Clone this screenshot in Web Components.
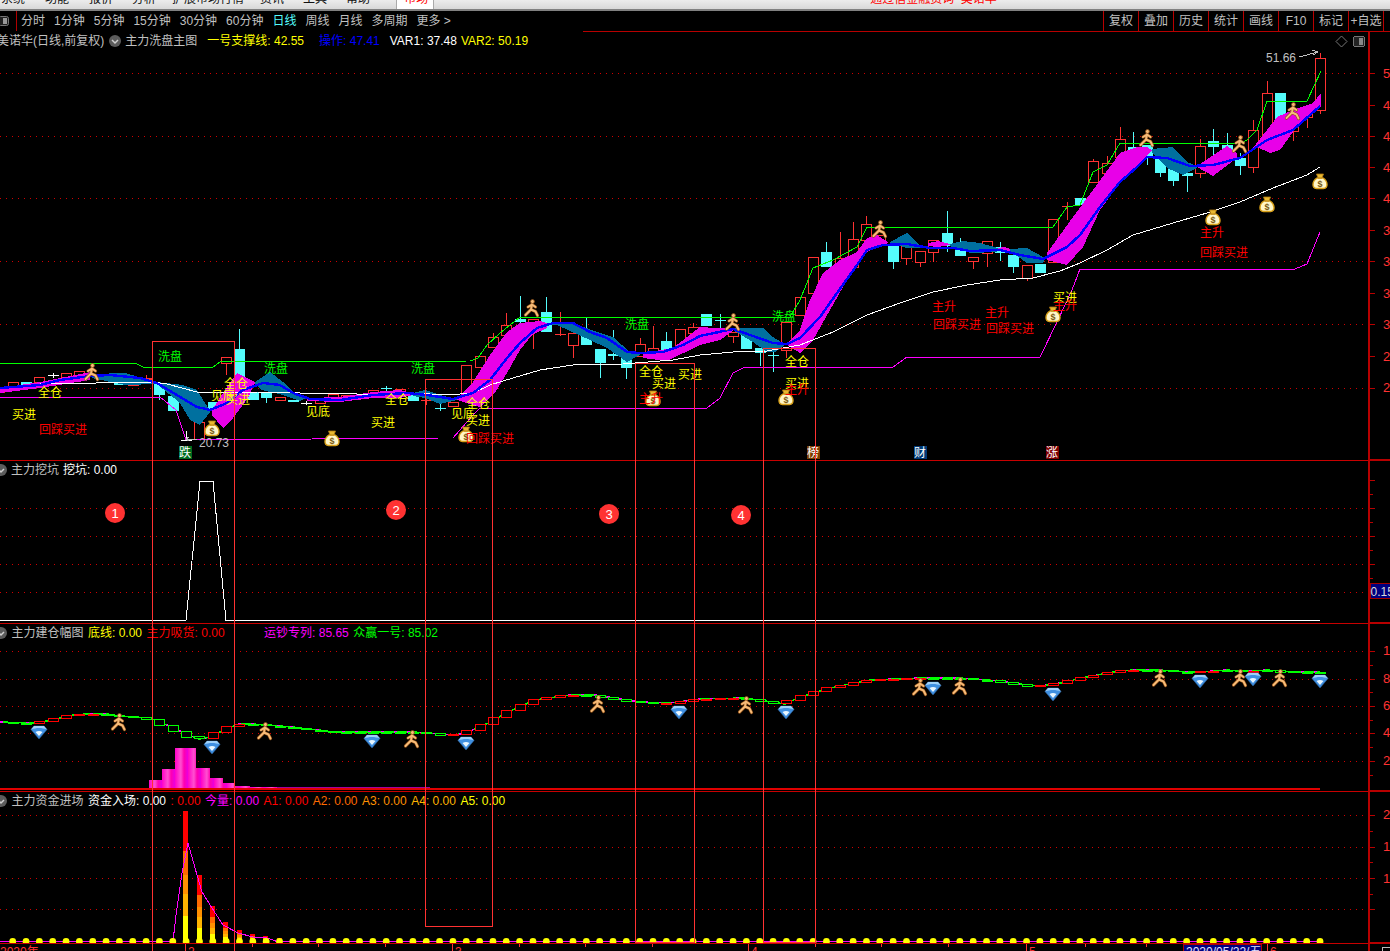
<!DOCTYPE html>
<html lang="zh">
<head>
<meta charset="utf-8">
<title>美诺华 日线</title>
<style>
html,body{margin:0;padding:0;background:#000;overflow:hidden}
stock-terminal{font:12px/1 "Liberation Sans","Noto Sans CJK SC",sans-serif}
</style>
</head>
<body>
<stock-terminal></stock-terminal>
<script>
const RED='#ff3232',CY='#54fcfc',GRID='#d00000',AXIS='#b80000';
const cx=i=>-0.64+13.34*i;
const pts=a=>{let s='';for(let i=0;i<a.length;i+=2)s+=a[i]+','+a[i+1]+' ';return s};
const line=(a,c,w=1,extra='')=>`<polyline fill="none" stroke="${c}" stroke-width="${w}" points="${pts(a)}" ${extra}/>`;
const hl=(y,x1=0,x2=1368)=>`<line x1="${x1}" x2="${x2}" y1="${y+.5}" y2="${y+.5}" stroke="${GRID}" stroke-dasharray="1 5"/>`;
const t=(x,y,s,c,a='middle',fs=12)=>`<text x="${x}" y="${y+4.5}" fill="${c}" text-anchor="${a}" font-size="${fs}">${s}</text>`;
function person(x,y){const d='M0-4L-1 1.5M0-3.500L-4-1M0-3.500L3.500-1M-1 1.5L-6.500 7M-1 1.5L3.500 3.500L5.500 7.500';return `<g transform="translate(${x} ${y})" shape-rendering="geometricPrecision" fill="none" stroke-linecap="round" stroke-linejoin="round">
<path d="${d}" stroke="#8a4a12" stroke-width="3.200"/>
<path d="${d}" stroke="#f6bb78" stroke-width="2"/>
<circle cx="0.5" cy="-6.500" r="2" fill="#f6bb78" stroke="#8a4a12" stroke-width=".7"/></g>`}
function bag(x,y){return `<g transform="translate(${x} ${y})" shape-rendering="geometricPrecision">
<path d="M-3-3C-8 0-8.500 7.500-3.500 7.500L3.500 7.500C8.500 7.500 8 0 3-3Z" fill="#fff6c8" stroke="#d8a018" stroke-width="1.400"/>
<path d="M-3.500-7L3.500-7L2-3L-2-3Z" fill="#e8b830" stroke="#b07a10" stroke-width=".8"/>
<text x="0" y="5.500" text-anchor="middle" font-size="9" font-weight="700" fill="#7a5a10">$</text></g>`}
function gem(x,y){return `<g transform="translate(${x} ${y})" shape-rendering="geometricPrecision">
<path d="M-8-2.500L-5-6L5-6L8-2.500L0 7Z" fill="#3f8fe0" stroke="#2a5f9a" stroke-width=".6"/>
<path d="M-8-2.500L-5-6L5-6L8-2.500C3-4.500-3-4.500-8-2.500Z" fill="#9fd0f8"/>
<path d="M-3.500 0C-1-1.500 1-1.500 3.500 0L0 4Z" fill="#e8f6ff"/></g>`}

const CANDLES=`r 0 389 392;r 1 382 386;c 2 382 385;r 3 377 382;w 4 375 375 373 378;r 5 373 377;r 6 371 375;c 7 375 377;c 8 377 380;c 9 380 385;r 10 382 385;r 11 378 379 375 382;c 12 383 395 383 400;c 13 396 411;w 14 440 440 431 440;r 15 422 439;c 16 402 410;r 17 357 363 357 375;c 18 349 383 329 383;c 19 392 400;c 20 393 398 393 403;r 21 397 400;c 22 400 402;w 23 403 403 401 405;r 24 400 403;r 25 394 397;r 26 395 398;r 27 396 398;r 28 390 395;c 29 388 388 386 391;r 30 389 392;c 31 395 401;r 32 400 400 392 405;c 33 408 408 403 411;r 34 402 406;r 35 365 393;r 36 356 367;r 37 337 347 333 347;r 38 325 335 313 335;c 39 319 322 296 330;r 40 319 323 319 349;c 41 312 332 297 332;r 42 334 334 312 336;r 43 333 345 333 358;c 44 333 345 318 345;c 45 349 363 349 378;c 46 354 356 330 360;c 47 358 368 358 379;r 48 344 356 338 356;r 49 348 355 326 355;c 50 341 352 332 352;r 51 329 345;r 52 327 333 323 333;c 53 314 326;c 54 320 321 314 338;r 55 332 336 332 343;c 56 335 349;c 57 348 353 348 366;c 58 355 355 351 372;r 59 322 350 322 358;r 60 297 315;r 61 257 293;c 62 252 267 242 267;r 63 258 275 232 275;r 64 239 267 222 267;r 65 224 240 216 240;r 66 235 240;c 67 246 262 246 269;r 68 246 258 246 265;r 69 251 262 251 267;r 70 240 252 240 262;c 71 233 246 211 252;c 72 247 256 238 256;r 73 257 261 257 269;r 74 241 253 241 267;c 75 247 253 242 261;c 76 255 267 255 273;r 77 265 278 265 281;c 78 264 273;r 79 219 262;r 80 206 206 202 220;c 81 198 205;r 82 161 182 159 182;r 83 163 173 156 173;r 84 139 157 127 157;c 85 147 150 132 150;c 86 145 157 145 165;c 87 158 173 158 177;c 88 168 181 168 186;c 89 173 176 173 192;r 90 146 173 139 178;c 91 141 147 129 160;c 92 145 150 133 160;c 93 158 166 153 175;r 94 130 167 120 173;r 95 93 138 81 138;c 96 93 120;r 97 127 131 127 141;r 98 113 117 113 128;r 99 58 110 53 114`;
function candleSvg(){
 return CANDLES.split(';').map(s=>{
  const p=s.split(' '),col=p[0],i=+p[1],top=+p[2],bot=+p[3],hi=p[4]?+p[4]:top,lo=p[5]?+p[5]:bot;
  const x=Math.round(cx(i)),c=col==='r'?RED:col==='c'?CY:'#fff';
  let o=`<line x1="${x+.5}" x2="${x+.5}" y1="${hi}" y2="${lo}" stroke="${c}"/>`;
  if(bot-top<1)o+=`<line x1="${x-5}" x2="${x+6}" y1="${top+.5}" y2="${top+.5}" stroke="${c}" stroke-width="1"/>`;
  else if(col==='r')o+=`<rect x="${x-5+.5}" y="${top+.5}" width="10" height="${bot-top}" fill="#000" stroke="${c}"/>`;
  else o+=`<rect x="${x-5}" y="${top}" width="11" height="${bot-top}" fill="${c}"/>`;
  return o}).join('');
}
const M='#e800e8',T='#00709f';
const BANDS=[
[M,[0,388,40,382,90,372],[0,393,40,388,90,380]],
[T,[92,374,125,373,157,382],[92,378,125,385,157,384]],
[T,[157,382,183,385,197,390,205,403,210,410],[157,384,180,403,190,420,200,425,210,412]],
[M,[212,410,227,387,237,373,255,382],[212,415,223,428,233,418,248,398,255,383]],
[T,[255,382,270,372,283,382,297,395,307,398],[255,384,262,390,283,395,300,401]],
[M,[307,398,340,397,373,392,400,390,413,393],[307,401,340,402,373,398,400,398,413,395]],
[T,[413,393,425,390,440,395,457,399],[413,396,425,398,440,404,457,400]],
[M,[457,398,473,382,490,355,507,332,520,323,540,321,547,323],[457,400,480,407,495,393,507,373,520,350,532,335,547,328]],
[T,[547,323,557,322,573,323,597,332,613,337,630,352,640,353],[547,325,557,325,590,340,607,348,627,362,640,355]],
[M,[643,353,673,348,700,327,733,329],[643,358,667,361,700,345,720,340,733,331]],
[T,[733,328,763,328,773,337,783,343],[733,330,753,342,767,352,775,352,785,345]],
[M,[787,343,800,330,810,300,823,273,840,260,857,252,867,238,877,235,888,242],[787,345,800,353,813,340,830,310,847,280,857,267,867,252,883,245,888,243]],
[T,[890,242,907,233,917,243,923,247],[890,243,907,248,923,248]],
[M,[928,243,938,241,950,244],[928,246,938,247,950,245]],
[T,[950,244,963,241,980,243,998,248],[950,246,970,253,997,252]],
[M,[998,248,1004,247,1010,249],[998,251,1004,252,1010,251]],
[T,[1010,249,1027,248,1045,258],[1010,251,1027,263,1043,263]],
[M,[1047,253,1073,217,1093,190,1120,153,1137,147,1147,147,1152,150],[1047,260,1067,265,1083,247,1100,210,1117,187,1137,165,1152,151]],
[T,[1152,149,1173,147,1187,162,1197,166],[1152,152,1167,168,1183,175,1197,168]],
[M,[1197,166,1227,146,1237,153],[1197,167,1213,176,1237,158]],
[M,[1253,148,1277,117,1293,110,1313,103,1321,93],[1257,147,1270,153,1280,150,1293,132,1307,117,1321,107]]
];
const rev=a=>{const o=[];for(let i=a.length-2;i>=0;i-=2)o.push(a[i],a[i+1]);return o};
const BLUE=[0,388,40,385,60,380,90,376,110,375,140,378,157,383,180,397,197,407,210,410,227,403,243,390,263,383,280,385,293,393,310,399,340,400,373,395,407,393,427,395,453,399,473,393,490,380,507,358,520,343,537,328,553,323,573,323,590,332,607,338,627,352,640,353,663,352,683,345,700,336,733,329,750,335,773,343,787,344,800,338,820,317,837,293,857,265,867,250,883,245,907,244,930,248,953,248,970,251,1000,250,1020,255,1043,259,1067,247,1080,235,1100,207,1120,182,1137,167,1147,157,1167,158,1190,166,1213,165,1240,158,1267,140,1293,130,1310,115,1320,106];
const WHITE=[40,384,153,382,167,384,197,392,257,392,300,393,340,393,373,395,413,393,447,395,473,393,490,385,513,378,540,370,573,365,623,364,673,360,700,355,733,352,767,351,800,345,833,332,867,315,900,303,933,292,967,285,1000,280,1033,278,1060,271,1080,263,1107,250,1133,235,1173,223,1207,213,1240,202,1273,188,1307,175,1320,167];
const GREEN=[0,363,135,363,143,367,213,367,220,362,470,361,478,358,487,345,500,333,520,317,790,317,800,300,813,268,833,260,857,247,867,227,1053,227,1067,207,1080,205,1093,172,1107,165,1120,143,1240,143,1247,140,1257,130,1267,101,1307,101,1321,71];
const SUP=[0,397,160,397,176,410,186,440,440,438,453,438,473,415,480,408,707,408,720,398,733,373,745,367,893,367,907,357,1040,357,1058,320,1072,290,1080,269,1295,269,1307,264,1320,232];
function mainPane(){
 let s=[73,136,198,261,324,388].map(y=>hl(y)).join('');
 s+=candleSvg();
 s+=line(GREEN,'#00ff00');
 s+=BANDS.map(b=>`<polygon fill="${b[0]}" points="${pts(b[1].concat(rev(b[2])))}"/>`).join('');
 s+=line(WHITE,'#fff',1);
 s+=line(BLUE,'#0000ff',2.4);
 s+=line(SUP,'#ff00ff',1);
 [[92,372],[532,308],[733,322],[880,229],[1147,138],[1240,144],[1293,111]].forEach(p=>s+=person(p[0],p[1]));
 [[212,428],[332,438],[466,434],[653,398],[786,397],[1053,314],[1213,217],[1267,204],[1320,181]].forEach(p=>s+=bag(p[0],p[1]));
 const Y='#ffff00',G='#00ff00',R='#ff0000';
 [[170,356],[276,368],[423,368],[637,324],[784,316]].forEach(p=>s+=t(p[0],p[1],'洗盘',G));
 [[50,392],[236,383],[397,399],[478,403],[651,371],[797,361]].forEach(p=>s+=t(p[0],p[1],'全仓',Y));
 [[24,414],[238,399],[383,422],[478,420],[664,383],[690,374],[797,383],[1065,297]].forEach(p=>s+=t(p[0],p[1],'买进',Y));
 [[223,395],[318,411],[463,413]].forEach(p=>s+=t(p[0],p[1],'见底',Y));
 [[63,429],[490,438],[957,324],[1010,328],[1224,252]].forEach(p=>s+=t(p[0],p[1],'回踩买进',R));
 [[651,398],[797,389],[944,306],[997,312],[1212,232],[1065,305]].forEach(p=>s+=t(p[0],p[1],'主升',R));
 s+=t(1266,57,'51.66','#c0c0c0','start');
 s+=line([1299,57,1307,55,1317,52],'#c0c0c0')+line([1312,50,1318,52,1313,55],'#c0c0c0');
 s+=t(199,442,'20.73','#c0c0c0','start');
 s+=line([197,439,186,439],'#c0c0c0')+line([189,437,186,439,189,441],'#c0c0c0');
 [[185,'跌','#006a1e'],[813,'榜','#7a3c00'],[920,'财','#003a78'],[1052,'涨','#7e0000']].forEach(b=>{
  s+=`<rect x="${b[0]-6.5}" y="446" width="13" height="13" fill="${b[2]}"/>`+t(b[0],452,b[1],'#fff','middle',12)});
 s+=`<path d="M1341.5 36L1347 41.500L1341.5 47L1336 41.500Z" fill="none" stroke="#777" shape-rendering="geometricPrecision"/>`;
 s+=`<rect x="1353.500" y="36.500" width="11" height="10" rx="2" fill="#222" stroke="#777"/><rect x="1359" y="38" width="4" height="7" fill="#888"/>`;
 return s;
}
function pane2(){
 let s=[508,536,564,592].map(y=>hl(y)).join('');
 s+=line([0,620.5,186,620.5,200,481,213,481,226,620.5,1320,620.5],'#fff',1);
 return s;
}
const P3=[0,722,33,723,47,721,60,718,73,715,87,714,107,714,120,716,133,717,150,718,159,722,172,727,186,734,199,739,212,737,225,729,239,724,252,724,267,725,279,726,293,727,307,729,319,730,333,732,347,732,373,732,387,732,400,732,413,732,427,733,440,734,453,735,466,733,479,727,493,721,506,713,519,707,535,700,570,695,595,695,640,702,670,703,700,699,745,698,785,704,800,697,830,688,870,680,920,678,960,678,1000,681,1027,685,1040,686,1053,684,1067,682,1080,678,1093,676,1107,673,1120,671,1133,670,1147,670,1160,670,1173,671,1187,672,1200,672,1213,671,1227,670,1240,671,1253,671,1267,670,1280,671,1293,672,1307,672,1320,672];
function yAt(x){for(let i=0;i<P3.length-2;i+=2){if(x<=P3[i+2]){const f=Math.max(0,(x-P3[i])/(P3[i+2]-P3[i]));return P3[i+1]+f*(P3[i+3]-P3[i+1])}}return P3[P3.length-1]}
function pane3(){
 let s=`<defs><linearGradient id="pk" gradientUnits="userSpaceOnUse" x1="149" x2="162" y1="0" y2="0" spreadMethod="repeat"><stop offset="0" stop-color="#ff00c8"/><stop offset=".45" stop-color="#ff50d0"/><stop offset=".7" stop-color="#ff00b0"/><stop offset="1" stop-color="#e800e0"/></linearGradient></defs>`;
 s+=[651,679,706,733,761].map(y=>hl(y)).join('');
 [[149,162,780],[162,175,769],[175,196,748],[196,210,768],[210,223,778],[223,235,783],[235,250,786],[250,277,787]].forEach(b=>s+=`<rect x="${b[0]}" y="${b[2]}" width="${b[1]-b[0]}" height="${788-b[2]}" fill="url(#pk)"/>`);
 s+=line([277,787.5,430,787.5],'#a000a0',1);
 s+=`<rect x="0" y="788" width="1320" height="2" fill="#e00000"/>`;
 s+=line(P3,'#00ff00',1.5)+line(P3,'#ff00ff',1.5,'stroke-dasharray="3 10"');
 for(let i=0;i<=99;i++){const x=Math.round(cx(i)),a=yAt(x-6.67),b=yAt(x+6.67),top=Math.round(Math.min(a,b)),bot=Math.round(Math.max(a,b));
  const c=b<a?'#ff0000':'#00ff00';
  if(x<0)continue;
  if(bot-top<2)s+=`<rect x="${x-5}" y="${top}" width="11" height="2" fill="${c}"/>`;
  else s+=`<rect x="${x-5+.5}" y="${top+.5}" width="10" height="${bot-top}" fill="#000" stroke="${c}"/>`;}
 [[39,732],[212,747],[372,741],[466,743],[679,712],[786,712],[933,688],[1053,694],[1200,681],[1253,679],[1320,681]].forEach(p=>s+=gem(p[0],p[1]));
 [[119,722],[265,731],[412,739],[598,704],[746,705],[920,687],[960,686],[1160,678],[1240,678],[1280,678]].forEach(p=>s+=person(p[0],p[1]));
 return s;
}
function pane4(){
 let s=[815,847,878,909].map(y=>hl(y)).join('');
 const cols=[[0,'#ff0000'],[.31,'#ff6a00'],[.49,'#ff9000'],[.64,'#ffb400'],[.81,'#ffff00']];
 [[185,811,5],[199,875,5],[212,906,5],[225,922,5],[239,930,5],[252,934,5],[265,936,5],[279,938,5]].forEach(b=>{
  const h=941-b[1];cols.forEach((c,k)=>{const st=cols[k][0],en=k<4?cols[k+1][0]:1;
   s+=`<rect x="${b[0]-2}" y="${b[1]+st*h}" width="${b[2]}" height="${(en-st)*h+.5}" fill="${c[1]}"/>`})});
 s+=line([0,941.5,173,941.5,176,915,182,873,188,843,197,875,202,892,212,908,223,925,238,933,253,937,267,938,277,941.5,1320,941.5],'#ff00ff',1);
 for(let i=1;i<=99;i++)s+=`<circle cx="${cx(i)}" cy="941.500" r="3.400" fill="#ffff00" shape-rendering="geometricPrecision"/>`;
 return s;
}
const AX={
 main:{long:[73,105,136,167,198,230,261,293,324,356,388],short:[],lab:[[74,'5'],[106,'4'],[137,'4'],[168,'4'],[199,'4'],[231,'3'],[262,'3'],[294,'3'],[325,'3'],[357,'2'],[388,'2']]},
 p2:{long:[480,508,536,564,592],short:[494,522,550,578],lab:[]},
 p3:{long:[651,679,706,733,761],short:[665,692,720,747,775],lab:[[651,'1'],[679,'8'],[706,'6'],[733,'4'],[761,'2']]},
 p4:{long:[815,847,878,909],short:[831,862,894],lab:[[815,'2'],[847,'1'],[879,'1']]}
};
const RENDER={main:mainPane,p2:pane2,p3:pane3,p4:pane4};

class StockTerminal extends HTMLElement{
 constructor(){super();this.attachShadow({mode:'open'}).innerHTML=`<style>
 :host{display:flex;flex-direction:column;width:1390px;height:951px;background:#000;overflow:hidden;color:#c0c0c0}
 </style>
 <top-menu></top-menu><chart-toolbar></chart-toolbar><chart-stage></chart-stage><time-axis></time-axis>`}
}
class TopMenu extends HTMLElement{
 constructor(){super();this.attachShadow({mode:'open'}).innerHTML=`<style>
 :host{display:flex;height:11px;box-sizing:border-box;overflow:hidden;background:linear-gradient(#ececec,#d8d8d8);border-bottom:2px solid #808080;color:#111;font-size:12px;line-height:12px}
 span{display:block;margin-top:-7px;white-space:nowrap;flex:none}
 .tab{margin-top:0;background:#fff;border:solid #aaa;border-width:0 1px;height:9px;width:38px;box-sizing:border-box;margin-left:26px;overflow:hidden}
 .tab b{display:block;font-weight:400;color:#f00;margin:-7px 0 0 7px}
 .r{color:#f00;margin-left:436px}
 </style>
 <span style="margin-left:1px">系统</span><span style="margin-left:20px">功能</span><span style="margin-left:20px">报价</span><span style="margin-left:19px">分析</span><span style="margin-left:16px">扩展市场行情</span><span style="margin-left:16px">资讯</span><span style="margin-left:19px">工具</span><span style="margin-left:19px">帮助</span>
 <div class="tab"><b>市场</b></div><span class="r">通过信金融资询&nbsp;&nbsp;美诺华</span>`}
}
class ChartToolbar extends HTMLElement{
 constructor(){super();const L=['分时','1分钟','5分钟','15分钟','30分钟','60分钟','日线','周线','月线','多周期','更多 &gt;'];
 const R=['复权','叠加','历史','统计','画线','F10','标记','+自选','1'];
 this.attachShadow({mode:'open'}).innerHTML=`<style>
 :host{display:flex;height:21px;color:#c0c0c0;font-size:12px;line-height:21px;overflow:hidden;flex:none}
 .ic{width:17px;box-sizing:border-box;border-right:1px solid #b00000;height:20px;display:flex;align-items:center;flex:none;margin-right:4px}
 .l{display:flex;gap:9px;flex:none}
 .on{color:${CY}}
 .sp{flex:1;border-bottom:1px solid ${AXIS};margin-left:132px;height:20px}
 .r{display:flex;flex:none;width:287px;overflow:hidden;border-bottom:1px solid ${AXIS};height:20px}
 .r span{flex:none;width:35px;box-sizing:border-box;border-left:1px solid ${AXIS};text-align:center}
 </style>
 <div class="ic"><svg width="12" height="12" style="margin-left:-2px"><rect x=".5" y="1.500" width="10" height="9" rx="2" fill="#222" stroke="#777"/><rect x="5" y="3" width="4" height="6" fill="#999"/></svg></div>
 <div class="l">${L.map(s=>`<span class="${s==='日线'?'on':''}">${s}</span>`).join('')}</div>
 <div class="sp"></div><div class="r">${R.map(s=>`<span>${s}</span>`).join('')}</div>`}
}
class LegendDot extends HTMLElement{
 constructor(){super();this.attachShadow({mode:'open'}).innerHTML=`<style>:host{display:inline-flex;flex:none;width:12px;height:12px}</style>
 <svg width="12" height="12"><circle cx="6" cy="6" r="6" fill="#5c5c5c"/><path d="M3 5L6 8L9 5" fill="none" stroke="#d0d0d0" stroke-width="1.500"/></svg>`}
}
class PaneLegend extends HTMLElement{
 constructor(){super();this.attachShadow({mode:'open'}).innerHTML=`<style>
 :host{position:absolute;left:0;top:0;display:flex;align-items:center;height:var(--h,17px);gap:var(--g,4.5px);white-space:nowrap;font-size:12px;z-index:2}
 </style><slot></slot>`}
}
class ChartPane extends HTMLElement{
 constructor(){super();this.attachShadow({mode:'open'})}
 connectedCallback(){
  const k=this.getAttribute('kind'),y0=+this.getAttribute('y0'),h=+this.getAttribute('h'),ih=h-1;
  const ax=AX[k];
  let a=`<rect x="0" y="${y0}" width="2" height="${h}" fill="${AXIS}"/>`;
  ax.long.forEach(y=>a+=`<rect x="2" y="${y}" width="5" height="1" fill="${AXIS}"/>`);
  ax.short.forEach(y=>a+=`<rect x="2" y="${y}" width="3" height="1" fill="${AXIS}"/>`);
  ax.lab.forEach(l=>a+=t(15,l[0]-.5,l[1],RED,'start',13));
  if(k==='p2')a+=`<rect x="2.500" y="583.500" width="22" height="15" fill="#000080" stroke="#a00000"/>`+t(2.500,591,'0.15','#d8d8d8','start',12);
  this.shadowRoot.innerHTML=`<style>
  :host{display:flex;height:${h}px;box-sizing:border-box;flex:none;position:relative;overflow:hidden}
  .plot{position:relative;width:1368px;flex:none;height:${h}px;box-sizing:border-box;border-bottom:1px solid #c80000}
  svg{display:block;shape-rendering:crispEdges}
  .axis{width:22px;flex:none;height:${h}px;box-sizing:border-box;border-bottom:2px solid ${AXIS}}
  </style>
  <div class="plot"><svg width="1368" height="${ih}" viewBox="0 ${y0} 1368 ${ih}">${RENDER[k]()}</svg><slot></slot></div>
  <div class="axis"><svg width="22" height="${ih}" viewBox="0 ${y0} 22 ${ih}">${a}</svg></div>`;
 }
}
class ChartStage extends HTMLElement{
 constructor(){super();
 const sp=(c,s,ml)=>`<span style="color:${c}${ml!==undefined?';margin-left:'+ml+'px':''}">${s}</span>`;
 const G='#c0c0c0',W='#fff',Y='#ff0',R='#f00',MG='#f0f';
 const rects=[[152,341,82,640],[425,379,67,547],[635,363,59,579],[763,348,52,594]];
 const circ=[[115,513,1],[396,510,2],[609,514,3],[741,515,4]];
 this.attachShadow({mode:'open'}).innerHTML=`<style>
 :host{display:block;position:relative;height:912px;flex:none;font:12px/1 "Liberation Sans","Noto Sans CJK SC",sans-serif}
 .ov{position:absolute;left:0;top:0;width:1390px;height:919px;overflow:visible;pointer-events:none;z-index:3}
 </style>
 <chart-pane kind="main" y0="32" h="429"><pane-legend style="--h:18px;--g:0">
  ${sp(G,'美诺华(日线,前复权)',-3)}<legend-dot style="margin-left:5px"></legend-dot>${sp(G,'主力洗盘主图',4)}${sp(Y,'一号支撑线: 42.55',10)}${sp('#00f','操作: 47.41',15)}${sp(W,'VAR1: 37.48',10)}${sp(Y,'VAR2: 50.19',4)}
 </pane-legend></chart-pane>
 <chart-pane kind="p2" y0="461" h="163"><pane-legend style="--h:17px;--g:4px">
  <legend-dot style="margin-left:-5px"></legend-dot>${sp(G,'主力挖坑')}${sp(W,'挖坑: 0.00')}
 </pane-legend></chart-pane>
 <chart-pane kind="p3" y0="624" h="168"><pane-legend>
  <legend-dot style="margin-left:-5px"></legend-dot>${sp(G,'主力建仓幅图')}${sp(Y,'底线: 0.00')}${sp(R,'主力吸货: 0.00')}${sp(MG,'运钞专列: 85.65',35)}${sp('#0f0','众赢一号: 85.02')}
 </pane-legend></chart-pane>
 <chart-pane kind="p4" y0="792" h="152"><pane-legend>
  <legend-dot style="margin-left:-5px"></legend-dot>${sp(G,'主力资金进场')}${sp(W,'资金入场: 0.00')}${sp(R,': 0.00')}${sp(MG,'今量: 0.00')}${sp(R,'A1: 0.00')}${sp('#ff6a00','A2: 0.00')}${sp('#ff9000','A3: 0.00')}${sp('#ffb400','A4: 0.00')}${sp(Y,'A5: 0.00')}
 </pane-legend></chart-pane>
 <svg class="ov" viewBox="0 32 1390 919" shape-rendering="crispEdges">
 ${rects.map(r=>`<rect x="${r[0]+.5}" y="${r[1]+.5}" width="${r[2]}" height="${r[3]}" fill="none" stroke="${RED}"/>`).join('')}
 ${circ.map(c=>`<circle cx="${c[0]}" cy="${c[1]}" r="10" fill="${RED}" shape-rendering="geometricPrecision"/>`+t(c[0],c[1],c[2],'#fff','middle',13)).join('')}
 </svg>`}
}
class TimeAxis extends HTMLElement{
 constructor(){super();
 const full=[[185,'2'],[452,'3'],[748,'4'],[1026,'5'],[1267,'6']],sh=[252,318,385,519,585,652,815,881,948,1085,1146];
 let s=t(0,951.5,'2020年',RED,'start');
 full.forEach(f=>s+=`<rect x="${f[0]}" y="944" width="1" height="7" fill="${RED}"/>`+t(f[0]+3,951.5,f[1],RED,'start'));
 sh.forEach(x=>s+=`<rect x="${x}" y="944" width="1" height="3" fill="${RED}"/>`);
 s+=`<rect x="1183.500" y="944.500" width="78" height="12" fill="#000080" stroke="#b00000"/>`+t(1186,951.5,'2020/05/22/五','#e0e0ff','start');
 s+=`<rect x="1368" y="944" width="2" height="7" fill="${AXIS}"/><rect x="1382.500" y="947.500" width="10" height="8" rx="1" fill="none" stroke="#bbb"/>`;
 this.attachShadow({mode:'open'}).innerHTML=`<style>:host{display:block;height:7px;flex:none;overflow:hidden}svg{display:block;shape-rendering:crispEdges}</style>
 <svg width="1390" height="7" viewBox="0 944 1390 7">${s}</svg>`}
}
[['legend-dot',LegendDot],['pane-legend',PaneLegend],['chart-pane',ChartPane],['chart-stage',ChartStage],['time-axis',TimeAxis],['top-menu',TopMenu],['chart-toolbar',ChartToolbar],['stock-terminal',StockTerminal]].forEach(d=>customElements.define(d[0],d[1]));
</script>
</body>
</html>
